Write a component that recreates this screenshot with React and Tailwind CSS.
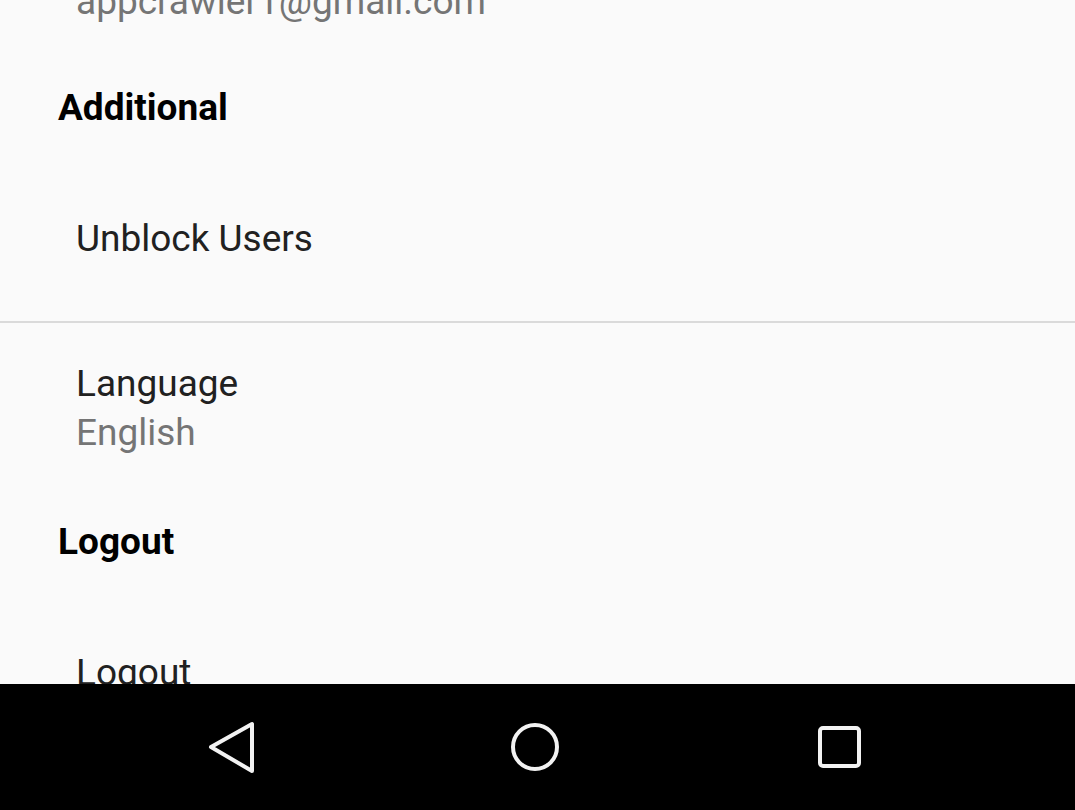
const font = { fontFamily: "Roboto, 'Noto Sans', sans-serif" };

function SectionHeader({ children }) {
  return (
    <div className="pl-[58px] text-[37px] font-bold leading-[44px] text-black">
      {children}
    </div>
  );
}

function Item({ title, summary }) {
  return (
    <div className="pl-[76px]">
      <div className="text-[37px] leading-[44px] text-[#212121]">{title}</div>
      {summary ? (
        <div className="mt-[5px] text-[37px] leading-[44px] text-[#757575]">{summary}</div>
      ) : null}
    </div>
  );
}

function NavBar() {
  return (
    <div className="flex h-[126px] shrink-0 items-center justify-center gap-[248px] bg-black pr-[5px]">
      <svg width="56" height="56" viewBox="0 0 56 56" fill="none">
        <path d="M8 28 L49 5 L49 52 Z" stroke="#f2f2f2" strokeWidth="4" strokeLinejoin="round" />
      </svg>
      <svg width="56" height="56" viewBox="0 0 56 56" fill="none">
        <circle cx="28" cy="28" r="22" stroke="#f2f2f2" strokeWidth="4" />
      </svg>
      <svg width="56" height="56" viewBox="0 0 56 56" fill="none">
        <rect x="9" y="9" width="39" height="38" rx="3" stroke="#f2f2f2" strokeWidth="4" />
      </svg>
    </div>
  );
}

export default function App() {
  return (
    <div className="flex h-[810px] w-[1075px] flex-col overflow-hidden bg-[#fafafa]" style={font}>
      <div className="flex-1 overflow-hidden">
        <div className="-mt-[20px]">
          <div className="pl-[76px] text-[37px] leading-[44px] text-[#757575]">appcrawler1@gmail.com</div>

          <div className="mt-[62px]">
            <SectionHeader>Additional</SectionHeader>
          </div>
          <div className="mt-[87px]">
            <Item title="Unblock Users" />
          </div>
          <div className="mt-[60px] h-[2px] bg-[#dadada]" />
          <div className="mt-[39px]">
            <Item title="Language" summary="English" />
          </div>

          <div className="mt-[65px]">
            <SectionHeader>Logout</SectionHeader>
          </div>
          <div className="mt-[87px]">
            <Item title="Logout" />
          </div>
        </div>
      </div>
      <NavBar />
    </div>
  );
}
